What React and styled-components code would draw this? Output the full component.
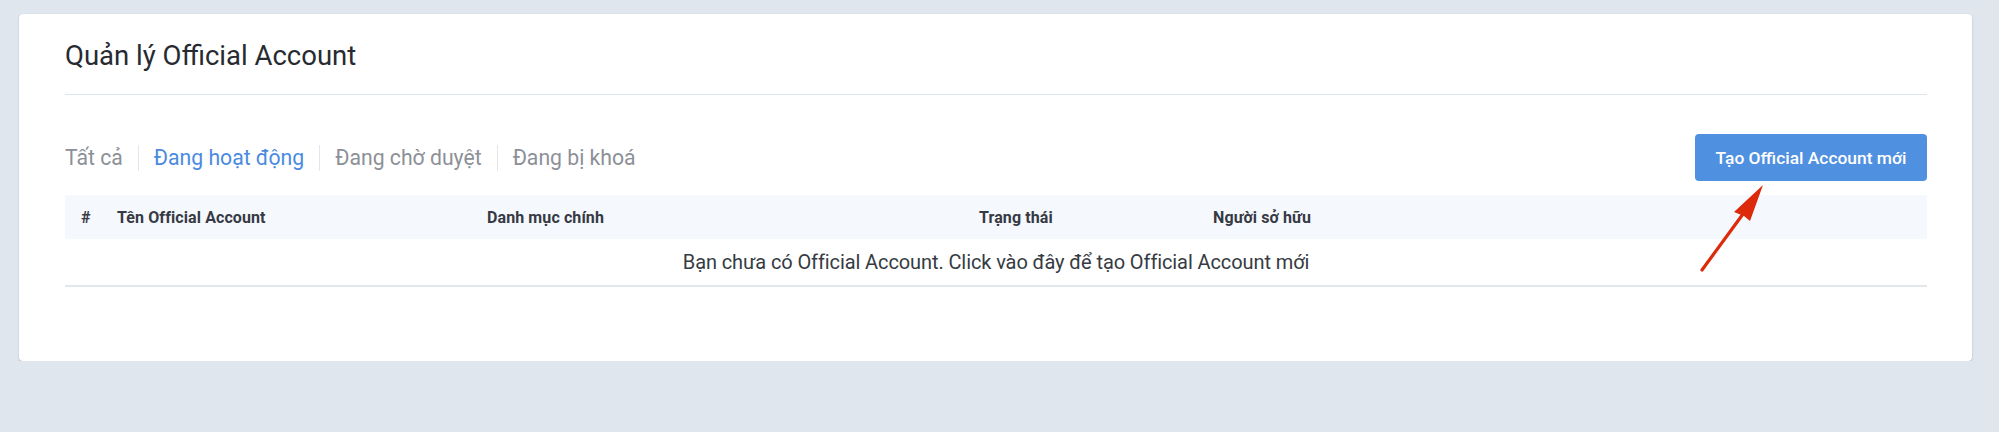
import React from 'react';
import styled, { createGlobalStyle } from 'styled-components';

const GlobalStyle = createGlobalStyle`
  body {
    margin: 0;
    background: #dfe6ee;
    font-family: Roboto, "Liberation Sans", Arial, sans-serif;
  }
`;

const Page = styled.div`
  padding: 14px 27px 0 19px;
`;

const Card = styled.div`
  position: relative;
  width: 1953px;
  height: 347px;
  box-sizing: border-box;
  background: #fff;
  border-radius: 4px;
  box-shadow: 0 1px 2px rgba(0, 0, 0, 0.18), 0 0 1px rgba(0, 0, 0, 0.12);
  padding: 0 45px 0 46px;
`;

const Header = styled.div`
  height: 80px;
  display: flex;
  align-items: center;
  border-bottom: 1px solid #dfe5ef;
`;

const Title = styled.h1`
  margin: 0;
  padding-top: 3px;
  font-size: 27.5px;
  font-weight: 400;
  color: #272b31;
`;

const Toolbar = styled.div`
  display: flex;
  align-items: center;
  justify-content: space-between;
  margin-top: 39px;
`;

const Tabs = styled.ul`
  display: flex;
  align-items: center;
  list-style: none;
  margin: 0;
  padding: 0;
`;

const Tab = styled.li`
  font-size: 21.2px;
  color: ${p => (p.active ? '#4a8ae0' : '#8c9097')};
  padding: 0 15px;
  line-height: 26px;
  border-left: 1px solid #e1e6ee;
  cursor: pointer;
  &:first-child {
    padding-left: 0;
    border-left: none;
  }
`;

const Button = styled.button`
  height: 47px;
  width: 232px;
  border: none;
  border-radius: 4px;
  background: #5090e0;
  color: #fff;
  font-family: inherit;
  font-size: 17.4px;
  font-weight: 500;
  cursor: pointer;
`;

const Table = styled.div`
  margin-top: 14px;
`;

const HeadRow = styled.div`
  display: grid;
  grid-template-columns: 36px 370px 492px 234px 1fr;
  height: 44px;
  align-items: center;
  background: #f5f8fc;
`;

const HeadCell = styled.div`
  padding-left: 16px;
  font-size: 16px;
  font-weight: 700;
  color: #353a44;
  letter-spacing: 0.1px;
`;

const EmptyRow = styled.div`
  height: 46px;
  display: flex;
  align-items: center;
  justify-content: center;
  border-bottom: 2px solid #e3e6eb;
  font-size: 20px;
  color: #363b43;
  letter-spacing: -0.1px;
  cursor: pointer;
`;

const Arrow = styled.svg`
  position: absolute;
  left: 1675px;
  top: 165px;
`;

const columns = ['#', 'Tên Official Account', 'Danh mục chính', 'Trạng thái', 'Người sở hữu'];
const tabs = ['Tất cả', 'Đang hoạt động', 'Đang chờ duyệt', 'Đang bị khoá'];

export default function App() {
  return (
    <>
      <GlobalStyle />
      <Page>
        <Card>
          <Header>
            <Title>Quản lý Official Account</Title>
          </Header>
          <Toolbar>
            <Tabs>
              {tabs.map((t, i) => (
                <Tab key={t} active={i === 1}>{t}</Tab>
              ))}
            </Tabs>
            <Button>Tạo Official Account mới</Button>
          </Toolbar>
          <Table>
            <HeadRow>
              {columns.map(c => (
                <HeadCell key={c}>{c}</HeadCell>
              ))}
            </HeadRow>
            <EmptyRow>Bạn chưa có Official Account. Click vào đây để tạo Official Account mới</EmptyRow>
          </Table>
          <Arrow width="80" height="100" viewBox="0 0 80 100">
            <line x1="8" y1="91" x2="49" y2="35" stroke="#dd2a0a" strokeWidth="3.2" strokeLinecap="round" />
            <polygon points="69,6 56,42 50,37 40,33" fill="#dd2a0a" />
          </Arrow>
        </Card>
      </Page>
    </>
  );
}
